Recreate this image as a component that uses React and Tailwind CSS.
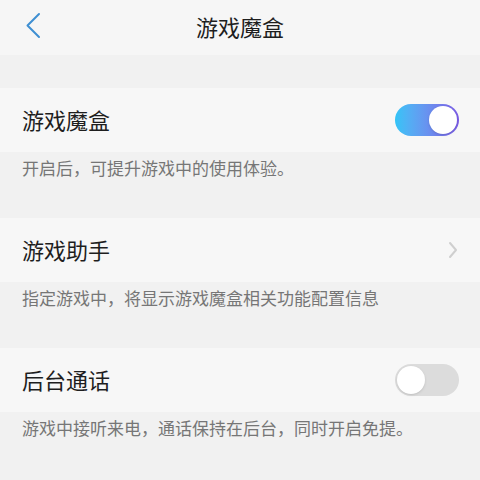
import React, { useState } from "react";

const font = { fontFamily: '"Noto Sans CJK SC", "Noto Sans", sans-serif' };

const Toggle = ({ on, onChange }) => (
  <button
    onClick={onChange}
    className={
      "relative w-[64px] h-[32px] rounded-full flex items-center px-[2px] " +
      (on ? "bg-gradient-to-r from-[#31c4f7] to-[#7a5be6] justify-end" : "bg-[#dcdcdc] justify-start")
    }
  >
    <span className="w-[28px] h-[28px] rounded-full bg-white shadow-sm" />
  </button>
);

const Row = ({ label, children }) => (
  <div className="h-[64px] bg-[#f7f7f7] flex items-center justify-between pl-[22px] pr-[21px]">
    <span className="text-[22px] text-[#1e1e1e] leading-none -mt-[3px]">{label}</span>
    {children}
  </div>
);

const Desc = ({ text }) => (
  <div className="h-[66px] bg-[#f1f1f1] pl-[22px] pt-[4px]">
    <p className="text-[17px] leading-[24px] text-[#767676]">{text}</p>
  </div>
);

export default function App() {
  const [box, setBox] = useState(true);
  const [call, setCall] = useState(false);

  return (
    <div className="w-[480px] h-[480px] overflow-hidden bg-[#f1f1f1]" style={font}>
      <div className="h-[55px] bg-[#f6f6f6] relative flex items-center justify-center">
        <svg className="absolute left-[23px] top-[12px]" width="22" height="28" viewBox="0 0 22 28">
          <path d="M16 2 L4.5 13.5 L16 25" fill="none" stroke="#3f8fd2" strokeWidth="2" strokeLinecap="round" strokeLinejoin="round" />
        </svg>
        <h1 className="text-[22px] text-[#1e1e1e] font-normal leading-none -mt-[4px]">游戏魔盒</h1>
      </div>
      <div className="h-[33px]" />
      <Row label="游戏魔盒">
        <Toggle on={box} onChange={() => setBox(!box)} />
      </Row>
      <Desc text="开启后，可提升游戏中的使用体验。" />
      <Row label="游戏助手">
        <svg width="12" height="20" viewBox="0 0 12 20">
          <path d="M3 3 L9 10 L3 17" fill="none" stroke="#cfcfcf" strokeWidth="2" strokeLinecap="round" strokeLinejoin="round" />
        </svg>
      </Row>
      <Desc text="指定游戏中，将显示游戏魔盒相关功能配置信息" />
      <Row label="后台通话">
        <Toggle on={call} onChange={() => setCall(!call)} />
      </Row>
      <Desc text="游戏中接听来电，通话保持在后台，同时开启免提。" />
    </div>
  );
}
